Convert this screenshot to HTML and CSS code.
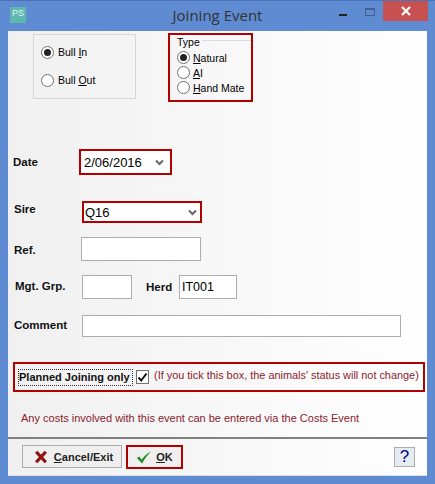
FILE: index.html
```html
<!DOCTYPE html>
<html lang="en">
  <head>
    <meta charset="UTF-8" />
    <meta name="viewport" content="width=device-width, initial-scale=1.0" />
    <title>Joining Event</title>
    <link rel="stylesheet" href="styles.css">
  </head>
  <body>
    <div class="window">
      <div class="titlebar">
        <div class="app-icon">PS</div>
        <div class="title">Joining Event</div>
        <div class="win-btns">
          <span class="win-min"></span>
          <span class="win-max"></span>
          <span class="win-close">
            <svg width="10" height="10" viewBox="0 0 10 10"><path d="M1 1 L9 9 M9 1 L1 9" stroke="#fff" stroke-width="2.2" fill="none"/></svg>
          </span>
        </div>
      </div>

      <div class="content">
        <div class="form">
          <div class="top-row">
            <div class="bull-group">
              <div class="radio-row"><span class="radio on"></span><span>Bull <u>I</u>n</span></div>
              <div class="radio-row"><span class="radio"></span><span>Bull <u>O</u>ut</span></div>
            </div>
            <div class="type-box">
              <div class="type-legend"><span>Type</span></div>
              <div class="type-row"><span class="radio on"></span><span><u>N</u>atural</span></div>
              <div class="type-row"><span class="radio"></span><span><u>A</u>I</span></div>
              <div class="type-row"><span class="radio"></span><span><u>H</u>and Mate</span></div>
            </div>
          </div>

          <div class="row row-date">
            <label class="lbl lbl-date">Date</label>
            <div class="combo combo-date">
              <span>2/06/2016</span>
              <svg class="chev" width="9" height="7" viewBox="0 0 9 7"><path d="M1 1.5 L4.5 5 L8 1.5" stroke="#666" stroke-width="2" fill="none"/></svg>
            </div>
          </div>

          <div class="row row-sire">
            <label class="lbl lbl-sire">Sire</label>
            <div class="combo combo-sire">
              <span>Q16</span>
              <svg class="chev" width="9" height="7" viewBox="0 0 9 7"><path d="M1 1.5 L4.5 5 L8 1.5" stroke="#666" stroke-width="2" fill="none"/></svg>
            </div>
          </div>

          <div class="row row-ref">
            <label class="lbl lbl-ref">Ref.</label>
            <div class="field field-ref"></div>
          </div>

          <div class="row row-mgt">
            <label class="lbl lbl-mgt">Mgt. Grp.</label>
            <div class="field field-mgt"></div>
            <label class="lbl lbl-herd">Herd</label>
            <div class="field field-herd">IT001</div>
          </div>

          <div class="row row-comment">
            <label class="lbl lbl-comment">Comment</label>
            <div class="field field-comment"></div>
          </div>

          <div class="planned">
            <span class="planned-label">Planned Joining only</span>
            <span class="check">
              <svg width="11" height="11" viewBox="0 0 11 11"><path d="M1.5 5.5 L4.2 8.5 L9.5 1.5" stroke="#111" stroke-width="2" fill="none"/></svg>
            </span>
            <span class="planned-note">(If you tick this box, the animals' status will not change)</span>
          </div>

          <p class="costs">Any costs involved with this event can be entered via the Costs Event</p>
        </div>

        <div class="footer">
          <div class="btn btn-cancel">
            <svg width="14" height="14" viewBox="0 0 16 16"><path d="M2.5 2 L13.5 14 M13.5 2 L2.5 14" stroke="#8e1414" stroke-width="3.8" fill="none"/></svg>
            <span><u>C</u>ancel/Exit</span>
          </div>
          <div class="ok-wrap">
            <div class="btn btn-ok">
              <svg width="16" height="15" viewBox="0 0 17 15"><path d="M1 8 L3.5 6.5 L6 10 C8.5 6 12 3 16 1 C12 5 9 9 6.5 14 Z" fill="#1c8a1c"/></svg>
              <span><u>O</u>K</span>
            </div>
          </div>
          <div class="btn-help">?</div>
        </div>
      </div>
    </div>
  </body>
</html>
```

FILE: styles.css
```css
* {
  box-sizing: border-box;
}
html, body {
  margin: 0;
  padding: 0;
}
body {
  font-family: "Liberation Sans", Arial, sans-serif;
  width: 435px;
  height: 484px;
  overflow: hidden;
}
.window {
  width: 435px;
  height: 484px;
  background-color: #5f8bd2;
  border-top: 1px solid #4a74b8;
  padding: 0 8px 8px 8px;
  display: flex;
  flex-direction: column;
}

/* title bar */
.titlebar {
  height: 30px;
  display: flex;
  position: relative;
  flex: none;
}
.app-icon {
  width: 16px;
  height: 16px;
  margin: 6px 0 0 2px;
  background-color: #5fb8b0;
  color: #dff3f0;
  font-size: 9px;
  line-height: 13px;
  text-align: center;
}
.title {
  flex: 1;
  text-align: center;
  font-size: 15px;
  line-height: 29px;
  color: #333;
  padding-right: 18px;
  font-family: "Open Sans", "Liberation Sans", sans-serif;
}
.win-btns {
  display: flex;
  position: absolute;
  top: 0;
  right: -1px;
  height: 20px;
}
.win-min {
  width: 8px;
  height: 2px;
  background-color: #222;
  margin: 13px 18px 0 0;
}
.win-max {
  width: 10px;
  height: 8px;
  border: 1px solid #44608f;
  border-top-width: 2px;
  margin: 7px 8px 0 0;
}
.win-close {
  width: 45px;
  height: 20px;
  background-color: #c75050;
  display: flex;
  align-items: center;
  justify-content: center;
}

/* main panel */
.content {
  flex: 1;
  background: linear-gradient(to right, #f0f0f0, #ffffff);
  display: flex;
  flex-direction: column;
}
.form {
  flex: 1;
  color: #000;
}
.top-row {
  display: flex;
  height: 71px;
  padding-top: 2px;
}
.bull-group {
  width: 103px;
  height: 65px;
  margin: 1px 0 0 25px;
  border: 1px solid #d6d6d6;
  padding: 8px 0 0 7px;
  font-size: 10.5px;
}
.radio-row {
  display: flex;
  align-items: center;
  gap: 4px;
  height: 18px;
  margin-bottom: 10px;
}
.type-box {
  width: 85px;
  height: 69px;
  margin-left: 32px;
  border: 2px solid #b00000;
  font-size: 10.5px;
  padding: 2px 0 0 6px;
}
.type-legend {
  height: 12px;
  line-height: 11px;
  display: flex;
  align-items: flex-start;
  margin-bottom: 1px;
}
.type-legend span {
  padding-left: 1px;
}
.type-legend::after {
  content: "";
  flex: 1;
  border-top: 1px solid #dcdcdc;
  margin: 3px 0 0 2px;
}
.type-row {
  display: flex;
  align-items: center;
  gap: 3px;
  height: 15px;
  padding-left: 1px;
}
.radio {
  width: 13px;
  height: 13px;
  border-radius: 50%;
  border: 1px solid #707070;
  background-color: #fff;
  display: flex;
  align-items: center;
  justify-content: center;
  flex: none;
}
.radio.on::after {
  content: "";
  width: 7px;
  height: 7px;
  border-radius: 50%;
  background-color: #222;
}

/* form rows */
.row {
  display: flex;
  align-items: center;
}
.row-date {
  margin-top: 47px;
  height: 26px;
}
.row-sire {
  margin-top: 26px;
  height: 22px;
}
.row-ref {
  margin-top: 14px;
  height: 24px;
}
.row-mgt {
  margin-top: 14px;
  height: 24px;
}
.row-comment {
  margin-top: 16px;
  height: 22px;
}
.lbl {
  font-size: 11.5px;
  font-weight: bold;
  color: #111;
}
.lbl-date {
  margin-left: 5px;
  width: 66px;
}
.lbl-sire {
  margin-left: 6px;
  width: 68px;
  margin-top: -7px;
}
.lbl-ref {
  margin-left: 6px;
  width: 67px;
  margin-top: 2px;
}
.lbl-mgt {
  margin-left: 7px;
  width: 67px;
  margin-top: -3px;
}
.lbl-herd {
  margin-left: 14px;
  width: 33px;
  margin-top: -1px;
}
.lbl-comment {
  margin-left: 6px;
  width: 68px;
  margin-top: -2px;
}
.combo {
  border: 2px solid #b00000;
  background-color: #fff;
  font-size: 13px;
  display: flex;
  align-items: center;
  justify-content: space-between;
  height: 100%;
}
.combo-date {
  width: 93px;
  padding: 0 6px 0 3px;
}
.combo-sire {
  width: 120px;
  padding: 0 3px 0 1px;
}
.field {
  height: 100%;
  background-color: #fff;
  border: 1px solid #adadad;
  font-size: 12.5px;
  line-height: 22px;
  padding-left: 2px;
}
.field-ref {
  width: 120px;
}
.field-mgt {
  width: 50px;
}
.field-herd {
  width: 58px;
}
.field-comment {
  width: 319px;
}

/* planned joining */
.planned {
  margin: 25px 2px 0 5px;
  height: 30px;
  border: 2px solid #b00000;
  display: flex;
  align-items: center;
}
.planned-label {
  margin-left: 3px;
  width: 115px;
  font-size: 11px;
  font-weight: bold;
  color: #111;
  border: 1px dotted #333;
  line-height: 15px;
  white-space: nowrap;
}
.check {
  width: 13px;
  height: 14px;
  border: 1px solid #707070;
  background-color: #fff;
  margin-left: 3px;
  display: flex;
  align-items: center;
  justify-content: center;
  flex: none;
}
.planned-note {
  margin: -5px 0 0 5px;
  font-size: 10.9px;
  color: #8b1a2e;
  white-space: nowrap;
}
.costs {
  margin: 20px 0 0 13px;
  font-size: 11px;
  color: #8b1a2e;
}

/* footer */
.footer {
  height: 39px;
  flex: none;
  border-top: 2px solid #808080;
  border-bottom: 1px solid #e0e0e0;
  display: flex;
  align-items: flex-start;
  padding: 6px 12px 0 14px;
}
.btn {
  height: 23px;
  border: 1px solid #adadad;
  background-color: #efefef;
  font-size: 11px;
  font-weight: bold;
  color: #222;
  display: flex;
  align-items: center;
  justify-content: center;
  gap: 6px;
}
.btn-cancel {
  width: 100px;
  padding-left: 3px;
}
.ok-wrap {
  margin-left: 4px;
  width: 57px;
  height: 24px;
  border: 2px solid #b00000;
}
.btn-ok {
  height: 20px;
  border: none;
  gap: 4px;
}
.btn-help {
  margin: 2px 0 0 auto;
  width: 21px;
  height: 20px;
  border: 1px solid #adadad;
  background-color: #e4ecf2;
  color: #00007f;
  font-size: 17px;
  line-height: 18px;
  text-align: center;
}
```
